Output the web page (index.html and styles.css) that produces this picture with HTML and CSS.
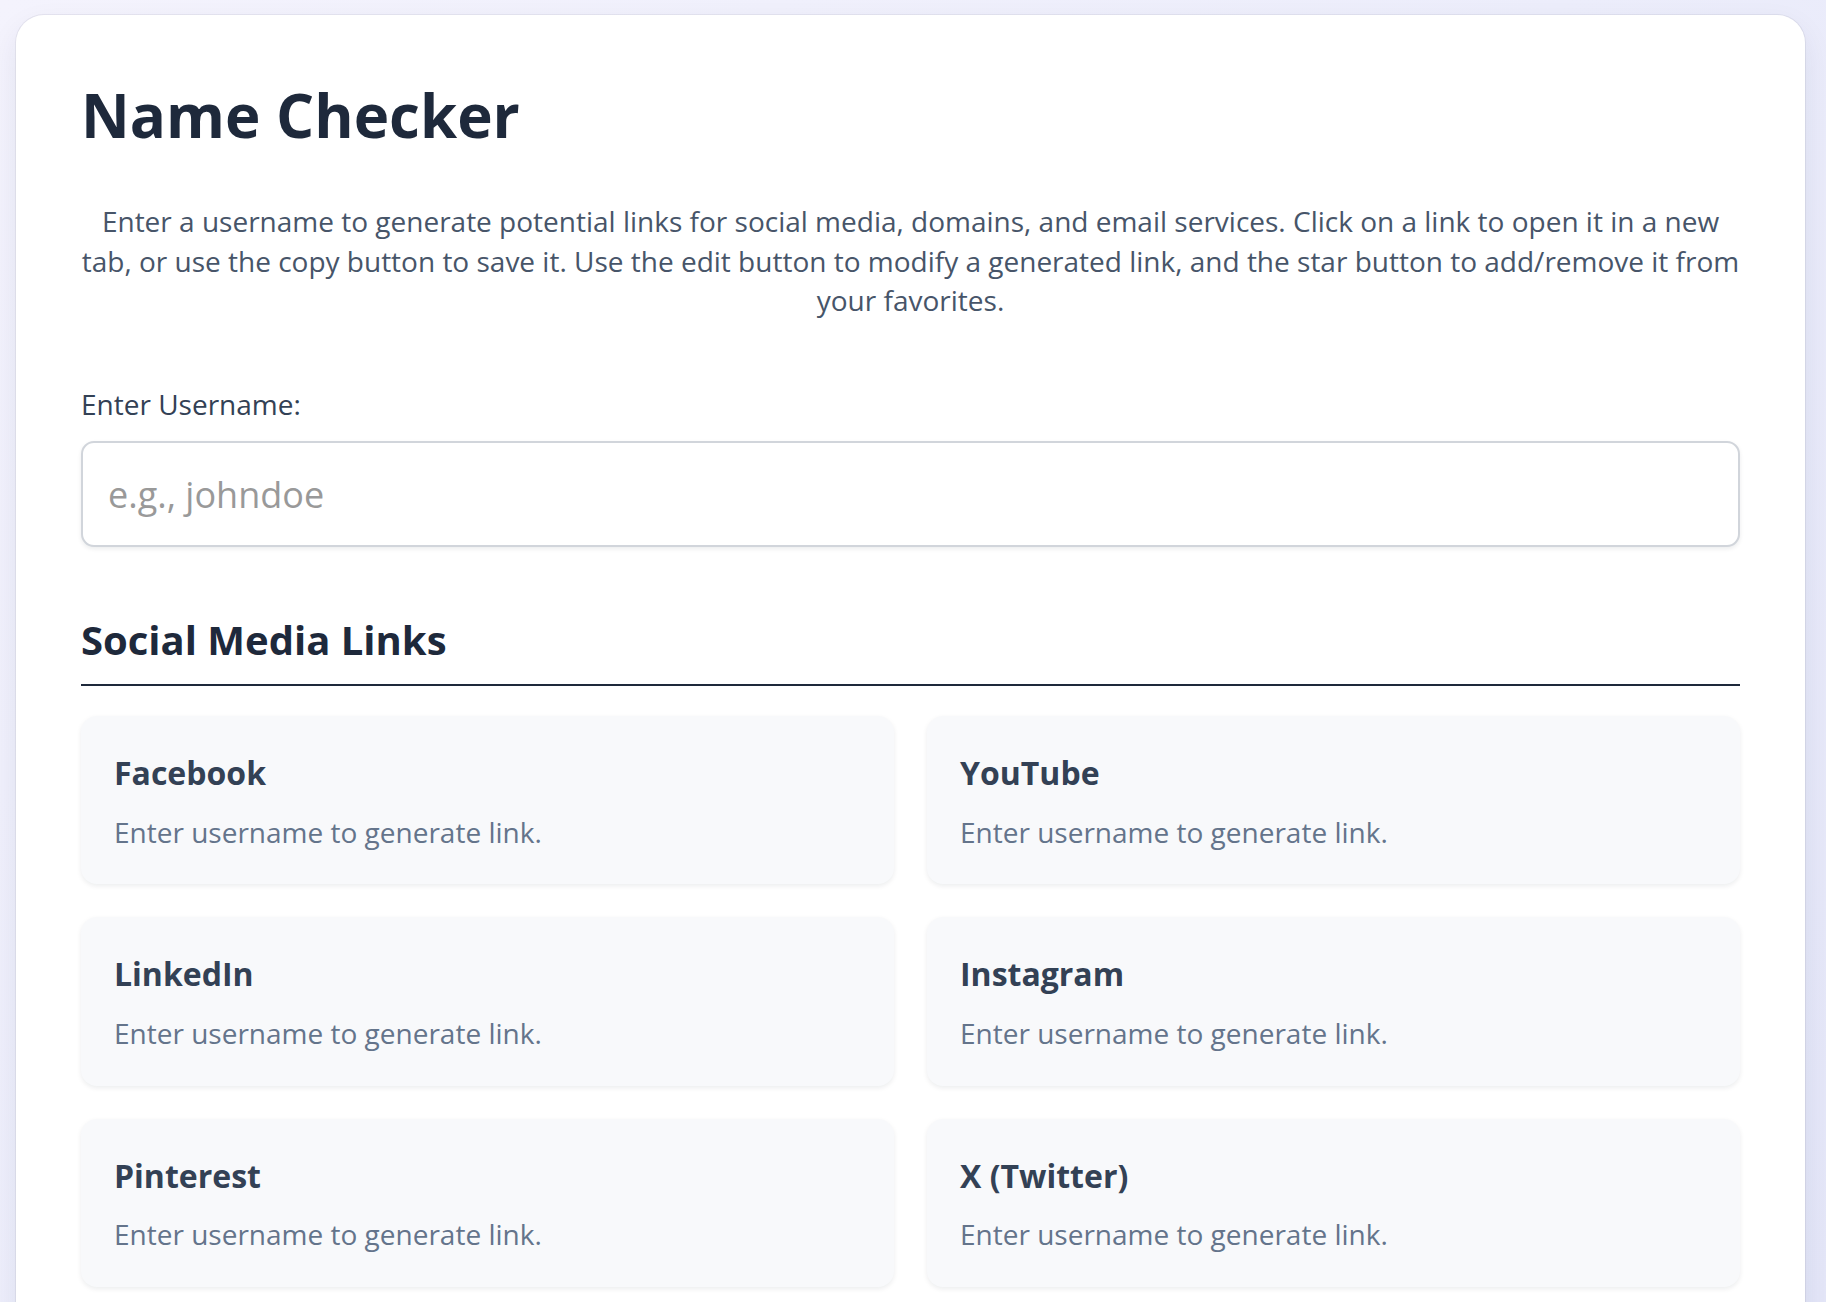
FILE: index.html
```html
<!DOCTYPE html>
<html lang="en">
<head>
<meta charset="utf-8">
<title>Name Checker</title>
<link rel="stylesheet" href="styles.css">
</head>
<body>
<main class="app">
  <h1 class="title">Name Checker</h1>
  <p class="intro">Enter a username to generate potential links for social media, domains, and email services. Click on a link to open it in a new tab, or use the copy button to save it. Use the edit button to modify a generated link, and the star button to add/remove it from your favorites.</p>
  <label class="field-label" for="username">Enter Username:</label>
  <input class="field-input" id="username" type="text" placeholder="e.g., johndoe">

  <section class="section">
    <h2 class="section-title">Social Media Links</h2>
    <div class="link-grid">
      <div class="link-card"><h3 class="link-name">Facebook</h3><p class="link-hint">Enter username to generate link.</p></div>
      <div class="link-card"><h3 class="link-name">YouTube</h3><p class="link-hint">Enter username to generate link.</p></div>
      <div class="link-card"><h3 class="link-name">LinkedIn</h3><p class="link-hint">Enter username to generate link.</p></div>
      <div class="link-card"><h3 class="link-name">Instagram</h3><p class="link-hint">Enter username to generate link.</p></div>
      <div class="link-card"><h3 class="link-name">Pinterest</h3><p class="link-hint">Enter username to generate link.</p></div>
      <div class="link-card"><h3 class="link-name">X (Twitter)</h3><p class="link-hint">Enter username to generate link.</p></div>
    </div>
  </section>
</main>
</body>
</html>
```

FILE: styles.css
```css
html, body {
  margin: 0;
  height: 100%;
  overflow: hidden;
}

body {
  background: linear-gradient(135deg, #f4f3fd 0%, #ecedfb 50%, #e4e6f8 100%);
  font-family: "Open Sans", "Liberation Sans", sans-serif;
  padding: 15px 21px 0 16px;
  box-sizing: border-box;
}

.app {
  background: #ffffff;
  border-radius: 28px;
  padding: 64px 65px 80px;
  box-shadow: 0 0 0 1px rgba(15, 23, 42, 0.06), 0 12px 30px rgba(30, 41, 80, 0.08);
  min-height: 1400px;
}

.title {
  margin: 0;
  font-size: 60px;
  line-height: 72px;
  font-weight: 700;
  color: #1e293b;
}

.intro {
  margin: 51px 0 0;
  font-size: 28px;
  line-height: 39.6px;
  color: #475569;
  text-align: center;
}

.field-label {
  display: block;
  margin-top: 65px;
  font-size: 28px;
  line-height: 37.5px;
  color: #334155;
}

.field-input {
  display: block;
  box-sizing: border-box;
  width: 100%;
  height: 106px;
  margin-top: 18px;
  padding: 0 25px;
  border: 2px solid #d1d5db;
  border-radius: 13px;
  font-family: inherit;
  font-size: 36px;
  color: #1e293b;
  background: #fff;
  box-shadow: 0 2px 4px rgba(15, 23, 42, 0.08);
  outline: none;
}

.field-input::placeholder {
  color: #999999;
}

.section {
  margin-top: 69px;
}

.section-title {
  margin: 0;
  font-size: 40px;
  line-height: 48px;
  font-weight: 700;
  color: #1e293b;
  padding-bottom: 20px;
  border-bottom: 2px solid #1e293b;
}

.link-grid {
  display: grid;
  grid-template-columns: 1fr 1fr;
  gap: 33px 33px;
  margin-top: 30px;
}

.link-card {
  background: #f8f9fb;
  border-radius: 16px;
  padding: 36px 33px 32px;
  box-shadow: 0 2px 5px rgba(15, 23, 42, 0.08);
}

.link-name {
  margin: 0;
  font-size: 32px;
  line-height: 41.6px;
  font-weight: 700;
  color: #334155;
}

.link-hint {
  margin: 19px 0 0;
  font-size: 28px;
  line-height: 39.6px;
  color: #64748b;
}
```
